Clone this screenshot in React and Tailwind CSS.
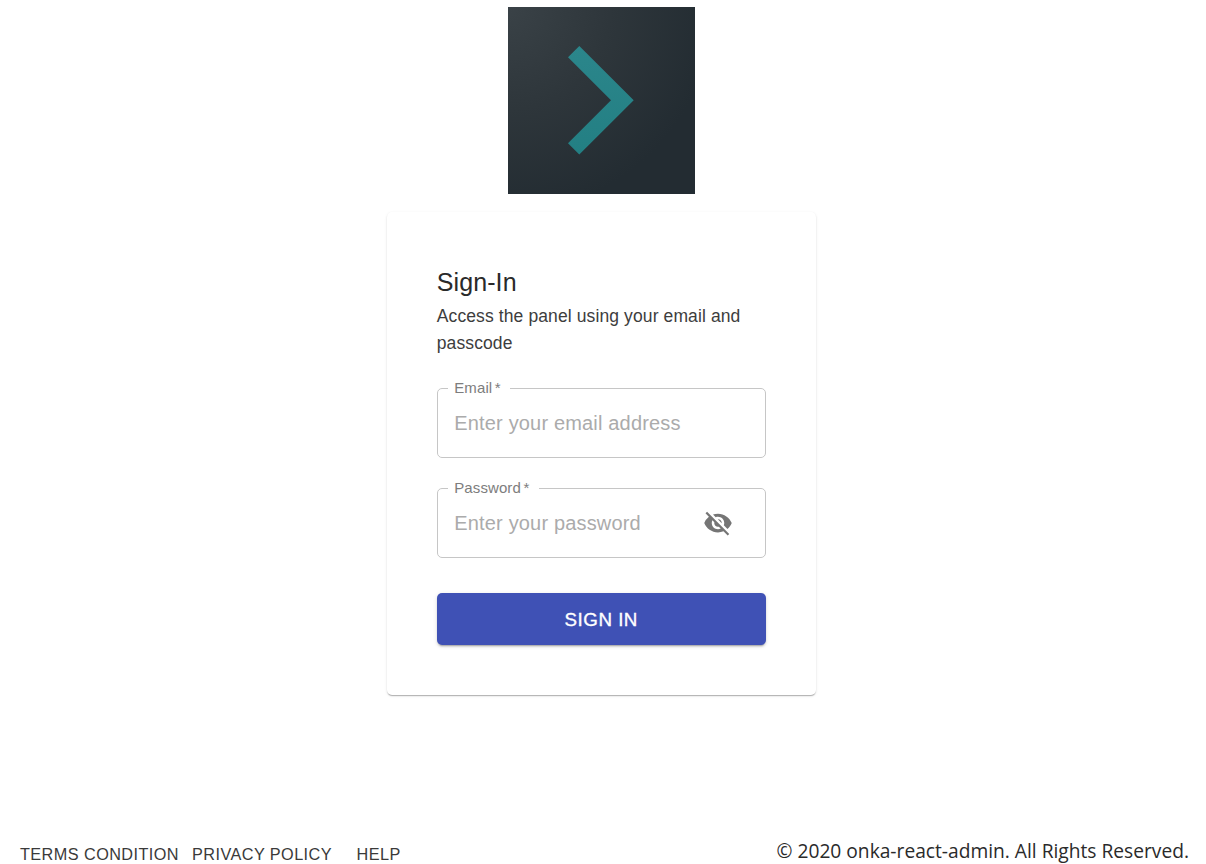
import { MdVisibilityOff } from "react-icons/md";

function Field({ label, legendWidth, placeholder, children }) {
  return (
    <fieldset className="flex h-[70px] w-[329px] min-w-0 rounded-[5px] border border-[#c6c6c6] pl-[10px]">
      <legend className={`h-px pl-[6.5px] text-[15px] leading-[1px] tracking-[0.1px] whitespace-nowrap text-[#7d7d7d] ${legendWidth}`}>
        <span className="relative -top-px">
          {label}
          <span className="ml-[2.5px]">*</span>
        </span>
      </legend>
      <div className="flex h-[68px] w-full items-center justify-between pr-[32px] pl-[6.5px]">
        <span className="text-[20px] leading-6 tracking-[0.17px] whitespace-nowrap text-[#ababab]">{placeholder}</span>
        {children}
      </div>
    </fieldset>
  );
}

export default function App() {
  return (
    <div className="flex h-[864px] w-[1206px] flex-col overflow-hidden bg-white font-['Liberation_Sans',sans-serif] text-[#2a2a2a]">
      <main className="flex flex-col items-center pt-[7px] pr-[3.5px]">
        <svg className="h-[187px] w-[187px]" viewBox="0 0 187 187" aria-hidden="true">
          <defs>
            <radialGradient id="shade" gradientUnits="userSpaceOnUse" cx="0" cy="0" r="205">
              <stop offset="0" stopColor="#3a4247" />
              <stop offset="0.5" stopColor="#2e363b" />
              <stop offset="1" stopColor="#232c32" />
            </radialGradient>
            <linearGradient id="teal" x1="0" y1="0" x2="0" y2="1">
              <stop offset="0" stopColor="#2b868b" />
              <stop offset="1" stopColor="#237f83" />
            </linearGradient>
          </defs>
          <rect width="187" height="187" fill="url(#shade)" />
          <path d="M60 50.2 71.3 39l54.4 54.2L71.3 147.4 60 136.2l43-43z" fill="url(#teal)" />
        </svg>
        <section className="mt-[17.5px] flex h-[483px] w-[429px] flex-col items-center rounded-[5px] bg-white pt-[50px] shadow-[0_2px_1px_-1px_rgba(0,0,0,0.16),0_1px_1px_0_rgba(0,0,0,0.12),0_1px_3px_0_rgba(0,0,0,0.1)]">
          <div className="h-[126.5px] w-[329px]">
            <h1 className="text-[25px] leading-[40px] tracking-[0.1px]">Sign-In</h1>
            <p className="pt-px text-[17.5px] leading-[27px] tracking-[0.11px] text-[#3d3d3d]">Access the panel using your email and passcode</p>
          </div>
          <form className="flex flex-col">
            <Field label="Email" legendWidth="w-[62px]" placeholder="Enter your email address" />
            <div className="h-[30px]" />
            <Field label="Password" legendWidth="w-[91px]" placeholder="Enter your password">
              <MdVisibilityOff className="h-[30px] w-[30px] shrink-0 text-[#757575]" />
            </Field>
            <button type="button" className="mt-[35px] h-[52px] w-[329px] rounded-[5px] bg-[#3f51b5] pt-[2px] text-[18.75px] tracking-[0.5px] text-white shadow-[0_3px_1px_-2px_rgba(0,0,0,0.18),0_2px_2px_0_rgba(0,0,0,0.12),0_1px_5px_0_rgba(0,0,0,0.1)] [-webkit-text-stroke:0.35px_white]">
              SIGN IN
            </button>
          </form>
        </section>
      </main>
      <footer className="mt-auto flex h-[25px] items-start justify-between pr-[17px] pl-[20px]">
        <nav className="flex pt-[5px] text-[16.25px] leading-5 tracking-[0.43px] whitespace-nowrap text-[#3a3a3a]">
          <a className="w-[172px]">TERMS CONDITION</a>
          <a className="w-[164.5px]">PRIVACY POLICY</a>
          <a>HELP</a>
        </nav>
        <p className="font-['Open_Sans',sans-serif] text-[19.2px] leading-6 whitespace-nowrap">© 2020 onka-react-admin. All Rights Reserved.</p>
      </footer>
    </div>
  );
}
